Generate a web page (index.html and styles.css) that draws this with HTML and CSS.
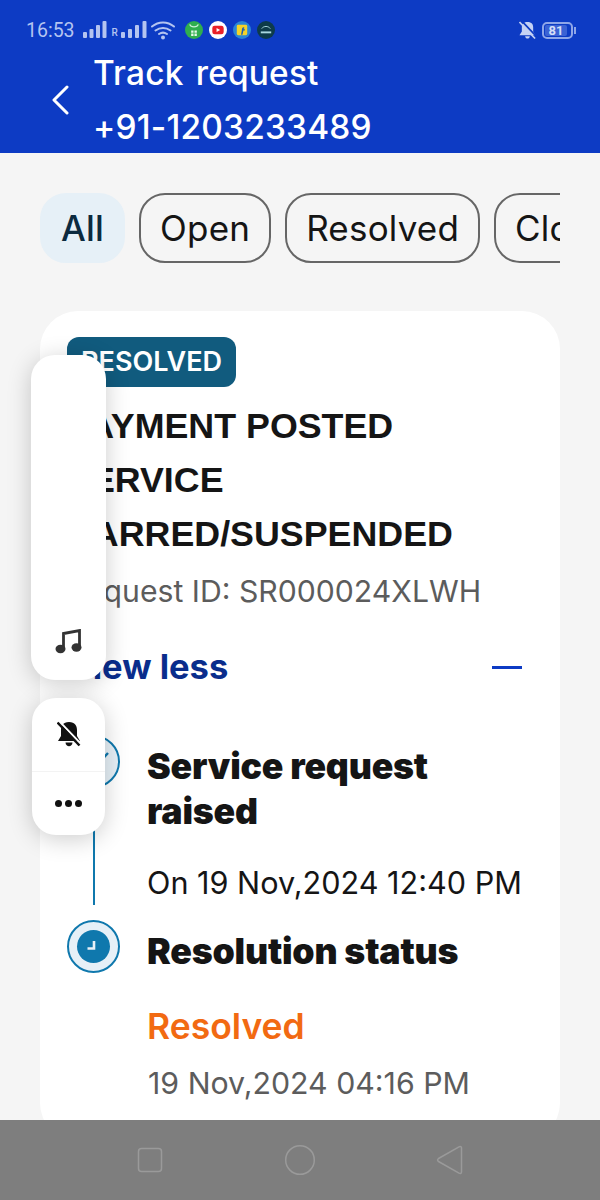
FILE: index.html
```html
<!DOCTYPE html>
<html lang="en">
<head>
    <meta charset="UTF-8">
    <meta name="viewport" content="width=device-width, initial-scale=1.0">
    <title>Track request</title>
    <link rel="stylesheet" href="styles.css">
</head>
<body>

<div class="screen">

    <header class="header">
        <div class="status-bar">
            <span class="clock">16:53</span>
            <svg class="signal" width="24" height="18" viewBox="0 0 24 18"><rect x="0" y="11" width="4" height="6" rx="1"/><rect x="6.500" y="8" width="4" height="9" rx="1"/><rect x="13" y="4" width="4" height="13" rx="1"/><rect x="19.500" y="0" width="4" height="17" rx="1"/></svg>
            <span class="roaming">R</span>
            <svg class="signal" width="26" height="18" viewBox="0 0 26 18"><rect x="0" y="11" width="4" height="6" rx="1"/><rect x="7" y="8" width="4" height="9" rx="1"/><rect x="14" y="4" width="4" height="13" rx="1"/><rect x="21.500" y="0" width="4" height="17" rx="1"/></svg>
            <svg class="wifi" width="24" height="20" viewBox="0 0 24 20"><path d="M1 6.500C7.500 1 16.500 1 23 6.500M4.500 10.500C9 7 15 7 19.500 10.500M8 14C10.500 12.300 13.500 12.300 16 14" fill="none" stroke="#b4c4f0" stroke-width="2" stroke-linecap="round"/><circle cx="12" cy="17.500" r="2" fill="#b4c4f0"/></svg>
            <span class="app-dots">
                <svg width="18" height="18" viewBox="0 0 19 19"><circle cx="9.500" cy="9.500" r="9.500" fill="#2fae4e"/><path d="M5 3.500C6 7 13 7 14 3.500" fill="none" stroke="#c9f0d2" stroke-width="1.300"/><path d="M6.500 10h2.500v2.500H6.500zM10 10h2.500v2.500H10zM6.500 13.300h2.500v2.500H6.500zM10 13.300h2.500v2.500H10z" fill="#e6f8ea"/></svg>
                <svg width="18" height="18" viewBox="0 0 19 19"><circle cx="9.500" cy="9.500" r="9.500" fill="#fff"/><rect x="3.500" y="5" width="12" height="9" rx="2.500" fill="#e8202a"/><path d="M8 7.300l3.800 2.200L8 11.700z" fill="#fff"/></svg>
                <svg width="18" height="18" viewBox="0 0 19 19"><circle cx="9.500" cy="9.500" r="9.500" fill="#2a86d6"/><rect x="4" y="4" width="11" height="11" rx="1.500" fill="#f5d328"/><path d="M11.500 6.500C9.500 6.500 9.500 8 9.300 10L8.500 14.500h1.500L11 10h1.500v-1.200H11.200C11.300 8 11.500 7.700 12.300 7.700z" fill="#1b5fb0"/></svg>
                <svg width="18" height="18" viewBox="0 0 19 19"><circle cx="9.500" cy="9.500" r="9.500" fill="#0d3b4a"/><path d="M5 8C7 5 12 5 14 8" fill="none" stroke="#a9d8e0" stroke-width="1"/><rect x="4" y="11" width="11" height="2" fill="#a9d8e0"/></svg>
            </span>
            <span class="status-spacer"></span>
            <svg class="mute-status" width="17" height="19" viewBox="0 0 18 20"><path d="M9 1C4.500 1 3 3.500 3 6.500V11L0.500 15H17.500L15 11V6.500C15 3.500 13.500 1 9 1Z" fill="#c5d2f4"/><path d="M6.500 16C6.800 19.400 11.200 19.400 11.500 16Z" fill="#c5d2f4"/><path d="M2.500 -0.500L19 17" stroke="#0d3bc4" stroke-width="1.800"/><path d="M0.500 1L17 18.500" stroke="#c5d2f4" stroke-width="1.800"/></svg>
            <span class="battery"><span class="battery-level">81</span></span>
        </div>

        <div class="title-row">
            <svg class="back" width="18" height="30" viewBox="0 0 18 30"><path d="M16 2L3 15L16 28" fill="none" stroke="#fff" stroke-width="3" stroke-linecap="round" stroke-linejoin="round"/></svg>
            <h1 class="title">Track request<br>+91-1203233489</h1>
        </div>
    </header>

    <main class="content">
        <div class="chips">
            <button class="chip chip-active">All</button>
            <button class="chip">Open</button>
            <button class="chip">Resolved</button>
            <button class="chip">Closed</button>
        </div>

        <section class="card">
            <span class="badge">RESOLVED</span>
            <h2 class="card-title">PAYMENT POSTED<br>SERVICE<br>BARRED/SUSPENDED</h2>
            <p class="request-id">Request ID: SR000024XLWH</p>

            <div class="toggle-row">
                <span class="toggle-label">View less</span>
                <span class="minus"></span>
            </div>

            <div class="step step-raised">
                <div class="step-marker">
                    <span class="step-ring">
                        <svg class="check" width="30" height="30" viewBox="0 0 30 30"><path d="M10 16l5 5L29 6" fill="none" stroke="#0f78ad" stroke-width="2.500"/></svg>
                    </span>
                    <span class="step-line"></span>
                </div>
                <div class="step-body">
                    <h3 class="step-title">Service request raised</h3>
                    <p class="step-date">On 19 Nov,2024 12:40 PM</p>
                </div>
            </div>

            <div class="step">
                <div class="step-marker">
                    <span class="step-ring">
                        <span class="clock-dot">
                            <svg width="16" height="16" viewBox="0 0 16 16"><path d="M8 2V9.500H1.500" fill="none" stroke="#e8f0f7" stroke-width="2.600"/></svg>
                        </span>
                    </span>
                </div>
                <div class="step-body">
                    <h3 class="step-title">Resolution status</h3>
                    <p class="status-resolved">Resolved</p>
                    <p class="status-date">19 Nov,2024 04:16 PM</p>
                </div>
            </div>
        </section>
    </main>

    <nav class="nav-bar">
        <svg width="26" height="26" viewBox="0 0 26 26"><rect x="1.500" y="1.500" width="23" height="23" rx="3" fill="none" stroke="#9a9a9a" stroke-width="1.500"/></svg>
        <svg width="32" height="32" viewBox="0 0 32 32"><circle cx="16" cy="16" r="14.300" fill="none" stroke="#9a9a9a" stroke-width="1.500"/></svg>
        <svg width="28" height="30" viewBox="0 0 28 30"><path d="M2.500 13.500L23 1.800C24.500 1 25.500 1.800 25.500 3V27C25.500 28.200 24.500 29 23 28.200L2.500 16.500C1.300 15.700 1.300 14.300 2.500 13.500Z" fill="none" stroke="#9a9a9a" stroke-width="1.500"/></svg>
    </nav>

    <!-- floating toolbars from the screen recorder, they sit over the card -->
    <aside class="float float-music">
        <svg width="27" height="25" viewBox="0 0 27 25"><path d="M8.500 20V4.500L24.500 1.500V18" fill="none" stroke="#333" stroke-width="2.800"/><ellipse cx="5.500" cy="20" rx="5" ry="4.200" fill="#333"/><ellipse cx="21.500" cy="18.500" rx="5" ry="4.200" fill="#333"/></svg>
    </aside>
    <aside class="float float-tools">
        <div class="tool tool-bell">
            <svg width="24" height="27" viewBox="0 0 24 27"><path d="M12 1C6 1 4 5 4 9V15L1 20H23L20 15V9C20 5 18 1 12 1Z" fill="#111"/><path d="M8.500 21.500C8.800 26.500 15.200 26.500 15.500 21.500Z" fill="#111"/><path d="M2.500 0.500L24 23" stroke="#fff" stroke-width="2"/><path d="M0.500 1.500L22.500 24.500" stroke="#111" stroke-width="2.500"/></svg>
        </div>
        <div class="tool tool-more">
            <span class="dot"></span><span class="dot"></span><span class="dot"></span>
        </div>
    </aside>

</div>

</body>
</html>
```
FILE: styles.css
```css
* {
    box-sizing: border-box;
}

body {
    margin: 0;
    font-family: Inter, "Liberation Sans", sans-serif;
    background-color: #f5f5f5;
    color: #151515;
}

h1, h2, h3, p {
    margin: 0;
}

.screen {
    position: relative;
    width: 600px;
    height: 1200px;
    display: flex;
    flex-direction: column;
    overflow: hidden;
}

/* header */
.header {
    height: 153px;
    flex-shrink: 0;
    background-color: #0d3bc4;
    padding: 20px 25px 0 26px;
}

.status-bar {
    display: flex;
    align-items: center;
    height: 20px;
    color: #b4c4f0;
    font-family: Roboto, sans-serif;
}

.clock {
    font-size: 19.500px;
    margin-right: 8px;
}

.signal {
    fill: #b4c4f0;
}

.roaming {
    font-size: 10px;
    font-weight: 500;
    margin: 4px 3px 0 5px;
}

.wifi {
    margin-left: 4px;
}

.app-dots {
    display: flex;
    gap: 6px;
    margin-left: 10px;
}

.status-spacer {
    flex: 1;
}

.battery {
    position: relative;
    width: 31px;
    height: 17px;
    margin-left: 6px;
    margin-right: 2px;
    border: 2px solid #8fa6e8;
    border-radius: 5px;
    padding: 1px;
    display: flex;
}

.battery::after {
    content: "";
    position: absolute;
    right: -5px;
    top: 3px;
    width: 2px;
    height: 7px;
    background-color: #8fa6e8;
}

.battery-level {
    width: 22px;
    background-color: #3b62d4;
    border-radius: 2px;
    color: #d5def7;
    font-size: 13px;
    font-weight: 700;
    line-height: 11px;
    text-align: center;
}

.title-row {
    display: flex;
    align-items: center;
    margin-top: 6px;
    padding-left: 25px;
}

.back {
    margin-right: 24px;
}

.title {
    font-weight: 500;
    font-size: 33.400px;
    letter-spacing: 0.200px;
    word-spacing: 3px;
    line-height: 54px;
    color: #fff;
}

/* content */
.content {
    flex: 1;
    overflow: hidden;
    padding: 40px 40px 0;
}

.chips {
    display: flex;
    gap: 14px;
    overflow: hidden;
}

.chip {
    flex-shrink: 0;
    height: 70px;
    padding: 0 19px;
    font-family: inherit;
    font-size: 35px;
    letter-spacing: 0.200px;
    color: #151515;
    background-color: transparent;
    border: 2px solid #666;
    border-radius: 26px;
}

.chip-active {
    background-color: #e6f0f7;
    border-color: #e6f0f7;
    color: #0b2a3f;
    font-weight: 500;
}

.card {
    margin-top: 48px;
    height: 830px;
    padding: 26px 27px;
    background-color: #fff;
    border-radius: 38px;
}

.badge {
    display: inline-block;
    height: 50px;
    padding: 0 14px;
    background-color: #115b7e;
    border-radius: 12px;
    color: #fff;
    font-size: 27px;
    font-weight: 600;
    line-height: 50px;
}

.card-title {
    margin-top: 12px;
    font-family: "Liberation Sans", sans-serif;
    font-size: 35.800px;
    font-weight: 700;
    line-height: 54px;
}

.request-id {
    margin-top: 10px;
    font-size: 30.200px;
    line-height: 40px;
    color: #5c5c5c;
}

.toggle-row {
    display: flex;
    align-items: center;
    justify-content: space-between;
    margin-top: 36px;
    padding-right: 11px;
}

.toggle-label {
    font-size: 34.500px;
    font-weight: 700;
    line-height: 40px;
    color: #0a2d8c;
}

.minus {
    width: 30px;
    height: 3px;
    background-color: #0d3bc4;
}

/* timeline */
.step {
    display: flex;
    gap: 27px;
}

.step-raised {
    margin-top: 48px;
    height: 185px;
}

.step-marker {
    width: 53px;
    flex-shrink: 0;
    display: flex;
    flex-direction: column;
    align-items: center;
}

.step-ring {
    width: 53px;
    height: 53px;
    flex-shrink: 0;
    display: flex;
    align-items: center;
    justify-content: center;
    background-color: #e6f0f7;
    border: 2px solid #0f78ad;
    border-radius: 50%;
}

.step-line {
    width: 2px;
    flex: 1;
    margin: 6px 0 15px;
    background-color: #0f78ad;
}

.clock-dot {
    width: 33px;
    height: 33px;
    display: flex;
    align-items: center;
    justify-content: center;
    background-color: #0f78ad;
    border-radius: 50%;
}

.step-body {
    padding-top: 9px;
}

.step-title {
    font-size: 35.700px;
    font-weight: 900;
    line-height: 45px;
    letter-spacing: -0.200px;
    color: #151515;
}

.step-date {
    margin-top: 29px;
    font-size: 30.600px;
    line-height: 40px;
}

.status-resolved {
    margin-top: 31px;
    font-size: 35.500px;
    font-weight: 600;
    line-height: 44px;
    color: #f26a12;
}

.status-date {
    margin-top: 14px;
    padding-left: 1px;
    font-size: 30.300px;
    line-height: 40px;
    color: #5c5c5c;
}

/* android nav */
.nav-bar {
    height: 80px;
    flex-shrink: 0;
    display: flex;
    align-items: center;
    justify-content: space-between;
    padding: 0 136px 0 137px;
    background-color: #7e7e7e;
}

/* floating toolbars */
.float {
    position: absolute;
    background-color: #fff;
    box-shadow: 0 4px 24px rgba(0, 0, 0, 0.2);
}

.float-music {
    left: 31px;
    top: 355px;
    width: 75px;
    height: 325px;
    border-radius: 24px;
    display: flex;
    align-items: flex-end;
    justify-content: center;
    padding-bottom: 26px;
}

.float-tools {
    left: 32px;
    top: 698px;
    width: 73px;
    height: 137px;
    border-radius: 24px;
}

.tool {
    display: flex;
    align-items: center;
    justify-content: center;
    gap: 3px;
}

.tool-bell {
    height: 74px;
    border-bottom: 1px solid #f3f3f3;
}

.tool-more {
    height: 63px;
}

.dot {
    width: 7px;
    height: 7px;
    background-color: #111;
    border-radius: 50%;
}
```
